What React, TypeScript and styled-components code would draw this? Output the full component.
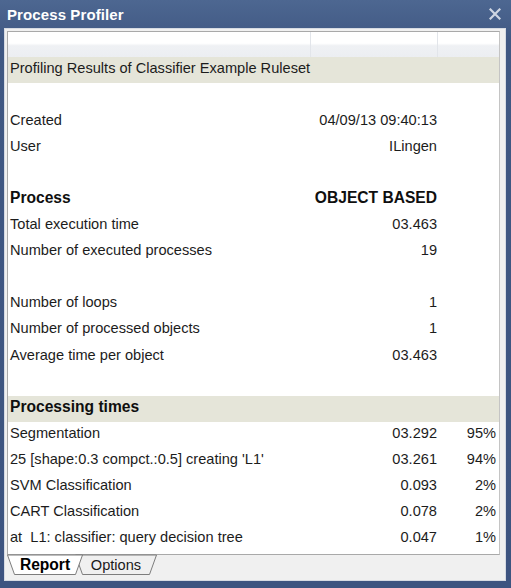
import React from 'react'
import styled, { createGlobalStyle, css } from 'styled-components'

const GlobalStyle = createGlobalStyle`
  html, body {
    margin: 0;
    padding: 0;
    background: #3f5681;
  }
`

const Window = styled.div`
  width: 511px;
  height: 588px;
  box-sizing: border-box;
  display: flex;
  flex-direction: column;
  padding: 0 5px 7px 4px;
  background: linear-gradient(180deg, #4d6791 0%, #405883 40px, #3d5480 100%);
  font-family: 'Liberation Sans', Arial, sans-serif;
`

const TitleBar = styled.div`
  height: 28px;
  flex: none;
  display: flex;
  align-items: center;
  justify-content: space-between;
  padding: 0 4px 0 3px;
`

const Title = styled.span`
  color: #ffffff;
  font-weight: bold;
  font-size: 15px;
  letter-spacing: 0.1px;
  margin-top: 1px;
`

const CloseButton = styled.span`
  display: flex;
  width: 14px;
  height: 14px;
  align-items: center;
  justify-content: center;
`

const Panel = styled.div`
  flex: 1;
  display: flex;
  flex-direction: column;
  background: #f0f0f0;
  border: 1px solid #d6dae2;
  padding: 2px 5px 0 2px;
  min-height: 0;
`

const Report = styled.div`
  flex: 1;
  background: #ffffff;
  border: 1px solid #a9a9a9;
  border-right-color: #c4c4c4;
  display: flex;
  flex-direction: column;
  overflow: hidden;
`

const HeaderRow = styled.div`
  height: 25px;
  flex: none;
  display: grid;
  grid-template-columns: 303px 127px 59px;
  background: linear-gradient(180deg, #ffffff 0%, #ffffff 45%, #eff1f4 55%, #eceef2 100%);
`

const HeaderCell = styled.div<{ $sep?: boolean }>`
  ${({ $sep }) =>
    $sep &&
    css`
      border-right: 1px solid #e2e5ea;
    `}
`

const Row = styled.div<{ $band?: boolean; $bold?: boolean }>`
  height: 26.1px;
  flex: none;
  display: grid;
  grid-template-columns: 303px 127px 59px;
  align-items: center;
  padding-bottom: 5px;
  box-sizing: border-box;
  color: #1c1c1c;
  font-size: 14.6px;
  background: ${({ $band }) => ($band ? '#e5e5d9' : 'transparent')};
  ${({ $bold }) =>
    $bold &&
    css`
      font-weight: bold;
      font-size: 15.6px;
      color: #0f0f0f;
    `}
`

const Label = styled.div`
  padding-left: 2px;
  white-space: pre;
`

const Value = styled.div`
  text-align: right;
  padding-right: 1px;
  white-space: nowrap;
`

const Percent = styled.div`
  text-align: right;
  padding-right: 1px;
  white-space: nowrap;
`

const TabBar = styled.div`
  height: 25px;
  flex: none;
  display: flex;
  align-items: flex-start;
`

const Tab = styled.div<{ $active?: boolean; $w: number }>`
  position: relative;
  width: ${({ $w }) => $w}px;
  height: 20px;
  display: flex;
  align-items: center;
  justify-content: center;
  font-size: 14.6px;
  color: #1a1a1a;
  z-index: ${({ $active }) => ($active ? 2 : 1)};
  ${({ $active }) =>
    $active
      ? css`
          font-weight: bold;
          font-size: 15.6px;
          color: #000000;
        `
      : css`
          margin-left: -8px;
        `}
  & > span {
    position: relative;
    margin-top: 0;
  }
`

const TabShape = styled.svg`
  position: absolute;
  left: 0;
  top: 0;
  width: 100%;
  height: 100%;
  overflow: visible;
`

const TabOutline = ({ w, active }: { w: number; active?: boolean }) => (
  <TabShape viewBox={`0 0 ${w} 20`} preserveAspectRatio="none">
    <polygon
      points={`0.5,0 7.5,19.5 ${w - 7.5},19.5 ${w - 0.5},0`}
      fill={active ? '#ffffff' : '#f0f0f0'}
      stroke="#7d7d7d"
      strokeWidth="1"
    />
  </TabShape>
)

type Line = {
  label?: string
  value?: string
  pct?: string
  band?: boolean
  bold?: boolean
}

const lines: Line[] = [
  { label: 'Profiling Results of Classifier Example Ruleset', band: true },
  {},
  { label: 'Created', value: '04/09/13 09:40:13' },
  { label: 'User', value: 'ILingen' },
  {},
  { label: 'Process', value: 'OBJECT BASED', bold: true },
  { label: 'Total execution time', value: '03.463' },
  { label: 'Number of executed processes', value: '19' },
  {},
  { label: 'Number of loops', value: '1' },
  { label: 'Number of processed objects', value: '1' },
  { label: 'Average time per object', value: '03.463' },
  {},
  { label: 'Processing times', band: true, bold: true },
  { label: 'Segmentation', value: '03.292', pct: '95%' },
  { label: "25 [shape:0.3 compct.:0.5] creating 'L1'", value: '03.261', pct: '94%' },
  { label: 'SVM Classification', value: '0.093', pct: '2%' },
  { label: 'CART Classification', value: '0.078', pct: '2%' },
  { label: 'at  L1: classifier: query decision tree', value: '0.047', pct: '1%' },
]

export default function App() {
  return (
    <>
      <GlobalStyle />
      <Window>
        <TitleBar>
          <Title>Process Profiler</Title>
          <CloseButton>
            <svg width="12" height="12" viewBox="0 0 12 12">
              <path d="M1.5 1.5 L10.5 10.5 M10.5 1.5 L1.5 10.5" stroke="#cfd6e2" strokeWidth="2.2" strokeLinecap="square" />
            </svg>
          </CloseButton>
        </TitleBar>
        <Panel>
          <Report>
            <HeaderRow>
              <HeaderCell $sep />
              <HeaderCell $sep />
              <HeaderCell />
            </HeaderRow>
            {lines.map((l, i) => (
              <Row key={i} $band={l.band} $bold={l.bold}>
                <Label>{l.label}</Label>
                <Value>{l.value}</Value>
                <Percent>{l.pct}</Percent>
              </Row>
            ))}
          </Report>
          <TabBar>
            <Tab $active $w={76}>
              <TabOutline w={76} active />
              <span>Report</span>
            </Tab>
            <Tab $w={82}>
              <TabOutline w={82} />
              <span>Options</span>
            </Tab>
          </TabBar>
        </Panel>
      </Window>
    </>
  )
}
